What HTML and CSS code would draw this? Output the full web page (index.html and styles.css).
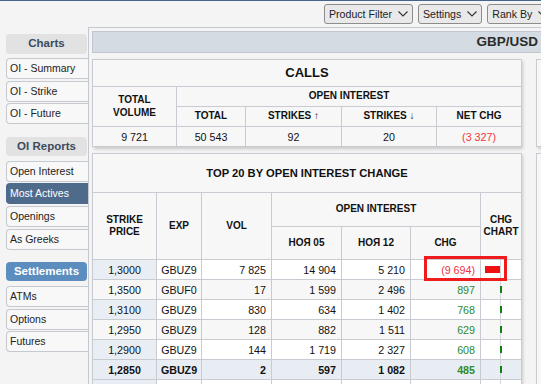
FILE: index.html
```html
<!DOCTYPE html>
<html lang="ru">
<head>
  <meta charset="UTF-8" />
  <title>OI Reports - Most Actives</title>
  <link rel="stylesheet" href="styles.css">
</head>
<body>

  <div class="topbar">
    <button class="drop">Product Filter <svg viewBox="0 0 10 6"><polyline points="0.5,0.5 5,5 9.5,0.5" /></svg></button>
    <button class="drop">Settings <svg viewBox="0 0 10 6"><polyline points="0.5,0.5 5,5 9.5,0.5" /></svg></button>
    <button class="drop">Rank By <svg viewBox="0 0 10 6"><polyline points="0.5,0.5 5,5 9.5,0.5" /></svg></button>
  </div>

  <div class="layout">
    <aside class="sidebar">
      <div class="group">
        <div class="group-title">Charts</div>
        <a class="side-link" href="#">OI - Summary</a>
        <a class="side-link" href="#">OI - Strike</a>
        <a class="side-link" href="#">OI - Future</a>
      </div>
      <div class="group">
        <div class="group-title">OI Reports</div>
        <a class="side-link" href="#">Open Interest</a>
        <a class="side-link active" href="#">Most Actives</a>
        <a class="side-link" href="#">Openings</a>
        <a class="side-link" href="#">As Greeks</a>
      </div>
      <div class="group">
        <div class="group-title blue">Settlements</div>
        <a class="side-link" href="#">ATMs</a>
        <a class="side-link" href="#">Options</a>
        <a class="side-link" href="#">Futures</a>
      </div>
    </aside>

    <main class="main">
      <div class="product-bar">GBP/USD</div>

      <div class="columns">
        <div class="col">
          <!-- calls summary -->
          <div class="panel">
            <table class="grid summary">
              <colgroup>
                <col style="width:84px"><col style="width:69px"><col style="width:96px"><col style="width:95px"><col style="width:85px">
              </colgroup>
              <tr class="title"><th colspan="5">CALLS</th></tr>
              <tr class="head">
                <th rowspan="2">TOTAL<br>VOLUME</th>
                <th colspan="4">OPEN INTEREST</th>
              </tr>
              <tr class="head">
                <th>TOTAL</th>
                <th>STRIKES <span class="arrow">↑</span></th>
                <th>STRIKES <span class="arrow">↓</span></th>
                <th>NET CHG</th>
              </tr>
              <tr>
                <td>9 721</td>
                <td>50 543</td>
                <td>92</td>
                <td>20</td>
                <td class="neg-val">(3 327)</td>
              </tr>
            </table>
          </div>

          <!-- top 20 -->
          <div class="panel top20">
            <table class="grid">
              <colgroup>
                <col style="width:64px"><col style="width:45px"><col style="width:70px"><col style="width:70px"><col style="width:69px"><col style="width:70px"><col style="width:41px">
              </colgroup>
              <thead>
                <tr class="title big"><th colspan="7">TOP 20 BY OPEN INTEREST CHANGE</th></tr>
                <tr class="head tall">
                  <th rowspan="2">STRIKE<br>PRICE</th>
                  <th rowspan="2">EXP</th>
                  <th rowspan="2">VOL</th>
                  <th colspan="3">OPEN INTEREST</th>
                  <th rowspan="2">CHG<br>CHART</th>
                </tr>
                <tr class="head tall">
                  <th>НОЯ 05</th>
                  <th>НОЯ 12</th>
                  <th>CHG</th>
                </tr>
              </thead>
              <tbody>
                <tr>
                  <td class="strike">1,3000</td><td>GBUZ9</td><td class="num">7 825</td>
                  <td class="num">14 904</td><td class="num">5 210</td><td class="num neg-val">(9 694)</td>
                  <td class="chart"><div class="track"><span class="half neg"><i class="bar down" style="width:15px"></i></span><span class="half pos"></span></div></td>
                </tr>
                <tr>
                  <td class="strike">1,3500</td><td>GBUF0</td><td class="num">17</td>
                  <td class="num">1 599</td><td class="num">2 496</td><td class="num pos-val">897</td>
                  <td class="chart"><div class="track"><span class="half neg"></span><span class="half pos"><i class="bar up"></i></span></div></td>
                </tr>
                <tr>
                  <td class="strike">1,3100</td><td>GBUZ9</td><td class="num">830</td>
                  <td class="num">634</td><td class="num">1 402</td><td class="num pos-val">768</td>
                  <td class="chart"><div class="track"><span class="half neg"></span><span class="half pos"><i class="bar up"></i></span></div></td>
                </tr>
                <tr>
                  <td class="strike">1,2950</td><td>GBUZ9</td><td class="num">128</td>
                  <td class="num">882</td><td class="num">1 511</td><td class="num pos-val">629</td>
                  <td class="chart"><div class="track"><span class="half neg"></span><span class="half pos"><i class="bar up"></i></span></div></td>
                </tr>
                <tr>
                  <td class="strike">1,2900</td><td>GBUZ9</td><td class="num">144</td>
                  <td class="num">1 719</td><td class="num">2 327</td><td class="num pos-val">608</td>
                  <td class="chart"><div class="track"><span class="half neg"></span><span class="half pos"><i class="bar up"></i></span></div></td>
                </tr>
                <tr class="current">
                  <td class="strike">1,2850</td><td>GBUZ9</td><td class="num">2</td>
                  <td class="num">597</td><td class="num">1 082</td><td class="num pos-val">485</td>
                  <td class="chart"><div class="track"><span class="half neg"></span><span class="half pos"><i class="bar up"></i></span></div></td>
                </tr>
                <tr>
                  <td class="strike">1,2800</td><td>GBUZ9</td><td class="num">56</td>
                  <td class="num">1 310</td><td class="num">1 742</td><td class="num pos-val">432</td>
                  <td class="chart"><div class="track"><span class="half neg"></span><span class="half pos"><i class="bar up"></i></span></div></td>
                </tr>
              </tbody>
            </table>
            <div class="mark"></div>
          </div>
        </div>

        <!-- puts column, mostly off screen -->
        <div class="col">
          <div class="panel stub stub-summary"></div>
          <div class="panel stub stub-top"></div>
        </div>
      </div>
    </main>
  </div>

</body>
</html>
```

FILE: styles.css
```css
* {
  box-sizing: border-box;
  margin: 0;
  padding: 0;
}

html,
body {
  overflow: hidden;
}

body {
  font-family: "Liberation Sans", Arial, sans-serif;
  font-size: 11px;
  color: #1a1a1a;
  background: #f4f4f4;
  border-top: 1px solid #46658a;
  width: 541px;
  height: 384px;
}

/* --- top toolbar --- */
.topbar {
  display: flex;
  gap: 5px;
  height: 26px;
  padding: 3px 0 0 324px;
}

.drop {
  flex: none;
  display: inline-flex;
  align-items: center;
  gap: 6px;
  height: 20px;
  padding: 0 4px;
  font-family: inherit;
  font-size: 10.6px;
  color: #222;
  background: #e9e9e9;
  border: 1px solid #8c8c8c;
  border-radius: 3px;
  white-space: nowrap;
}

.drop svg {
  width: 10px;
  height: 6px;
  fill: none;
  stroke: #333;
  stroke-width: 1.1;
}

.layout {
  display: flex;
  width: 560px;
}

/* --- sidebar --- */
.sidebar {
  flex: none;
  width: 88px;
  padding: 7px 0 0 6px;
}

.group + .group {
  margin-top: 12.2px;
}

.group-title {
  width: 81px;
  height: 19.5px;
  line-height: 19.5px;
  margin-bottom: 4.5px;
  border-radius: 4px;
  background: #e2e2e2;
  color: #3c4c5e;
  font-weight: bold;
  font-size: 11.5px;
  text-align: center;
}

.group-title.blue {
  background: #5b8ebf;
  color: #fff;
}

.side-link {
  display: block;
  height: 21px;
  line-height: 19px;
  margin-bottom: 1.7px;
  padding-left: 3px;
  border: 1px solid #c6c9cf;
  border-right: none;
  border-radius: 4px 0 0 4px;
  background: #f8f8f8;
  color: #222;
  font-size: 10.5px;
  text-decoration: none;
}

.side-link.active {
  background: #4f6b8c;
  border-color: #4f6b8c;
  color: #fff;
}

/* --- main area --- */
.main {
  flex: 1;
  min-width: 0;
  border-top: 1px solid #c5c8cf;
  border-left: 1px solid #c5c8cf;
  padding: 3px 0 0 3px;
}

.product-bar {
  height: 22px;
  line-height: 20px;
  padding-right: 21px;
  border: 1px solid #c2c6ce;
  background: #d5dbe2;
  text-align: right;
  font-weight: bold;
  font-size: 13.5px;
  color: #2b2b2b;
}

.columns {
  display: flex;
  align-items: flex-start;
  gap: 15px;
  margin-top: 6px;
}

.col {
  flex: none;
  width: 429px;
  display: flex;
  flex-direction: column;
  gap: 6px;
}

.panel {
  background: #f7f7f7;
  box-shadow: 2px 2px 3px rgba(0, 0, 0, 0.18);
}

.stub {
  border: 1px solid #c9cbd2;
}

.stub-summary {
  height: 88px;
}

.stub-top {
  height: 260px;
}

/* --- tables --- */
.grid {
  width: 429px;
  border-collapse: collapse;
  table-layout: fixed;
}

.grid th,
.grid td {
  border: 1px solid #c9cbd2;
  padding: 0;
  vertical-align: middle;
}

.grid th {
  background: #f7f7f7;
  color: #111;
  font-weight: bold;
  font-size: 10px;
  line-height: 12.5px;
}

.grid .title th {
  height: 27px;
  font-size: 13px;
}

.grid .title.big th {
  height: 39px;
  font-size: 11.2px;
}

.grid .head th {
  height: 20px;
}

.grid .head.tall th {
  height: 33.5px;
}

.arrow {
  font-weight: normal;
}

.grid td {
  height: 20px;
  background: #fff;
  color: #111;
  text-align: center;
  font-size: 10.7px;
}

.grid tbody tr:nth-child(even) td {
  background: #f7f7f7;
}

.grid td.strike {
  background: #e9eef5;
}

.grid tbody tr.current td {
  background: #e8edf4;
  font-weight: bold;
}

.grid td.num {
  text-align: right;
  padding-right: 5px;
}

.grid .neg-val {
  color: #f2323c;
}

.grid .pos-val {
  color: #2d8a2d;
}

/* change chart */
.track {
  display: flex;
  height: 19px;
}

.half {
  display: flex;
  align-items: center;
}

.half.neg {
  flex: none;
  width: 19px;
  justify-content: flex-end;
}

.half.pos {
  flex: 1;
  border-left: 1px solid #d3d6dc;
}

.bar {
  display: block;
  height: 7px;
}

.bar.down {
  background: #ee1111;
}

.bar.up {
  width: 2px;
  margin-left: -1px;
  background: #0f7f0f;
}

/* highlight frame */
.top20 {
  position: relative;
}

.mark {
  position: absolute;
  left: 332px;
  top: 103px;
  width: 83px;
  height: 25px;
  border: 3px solid #ee1c1c;
}
```
